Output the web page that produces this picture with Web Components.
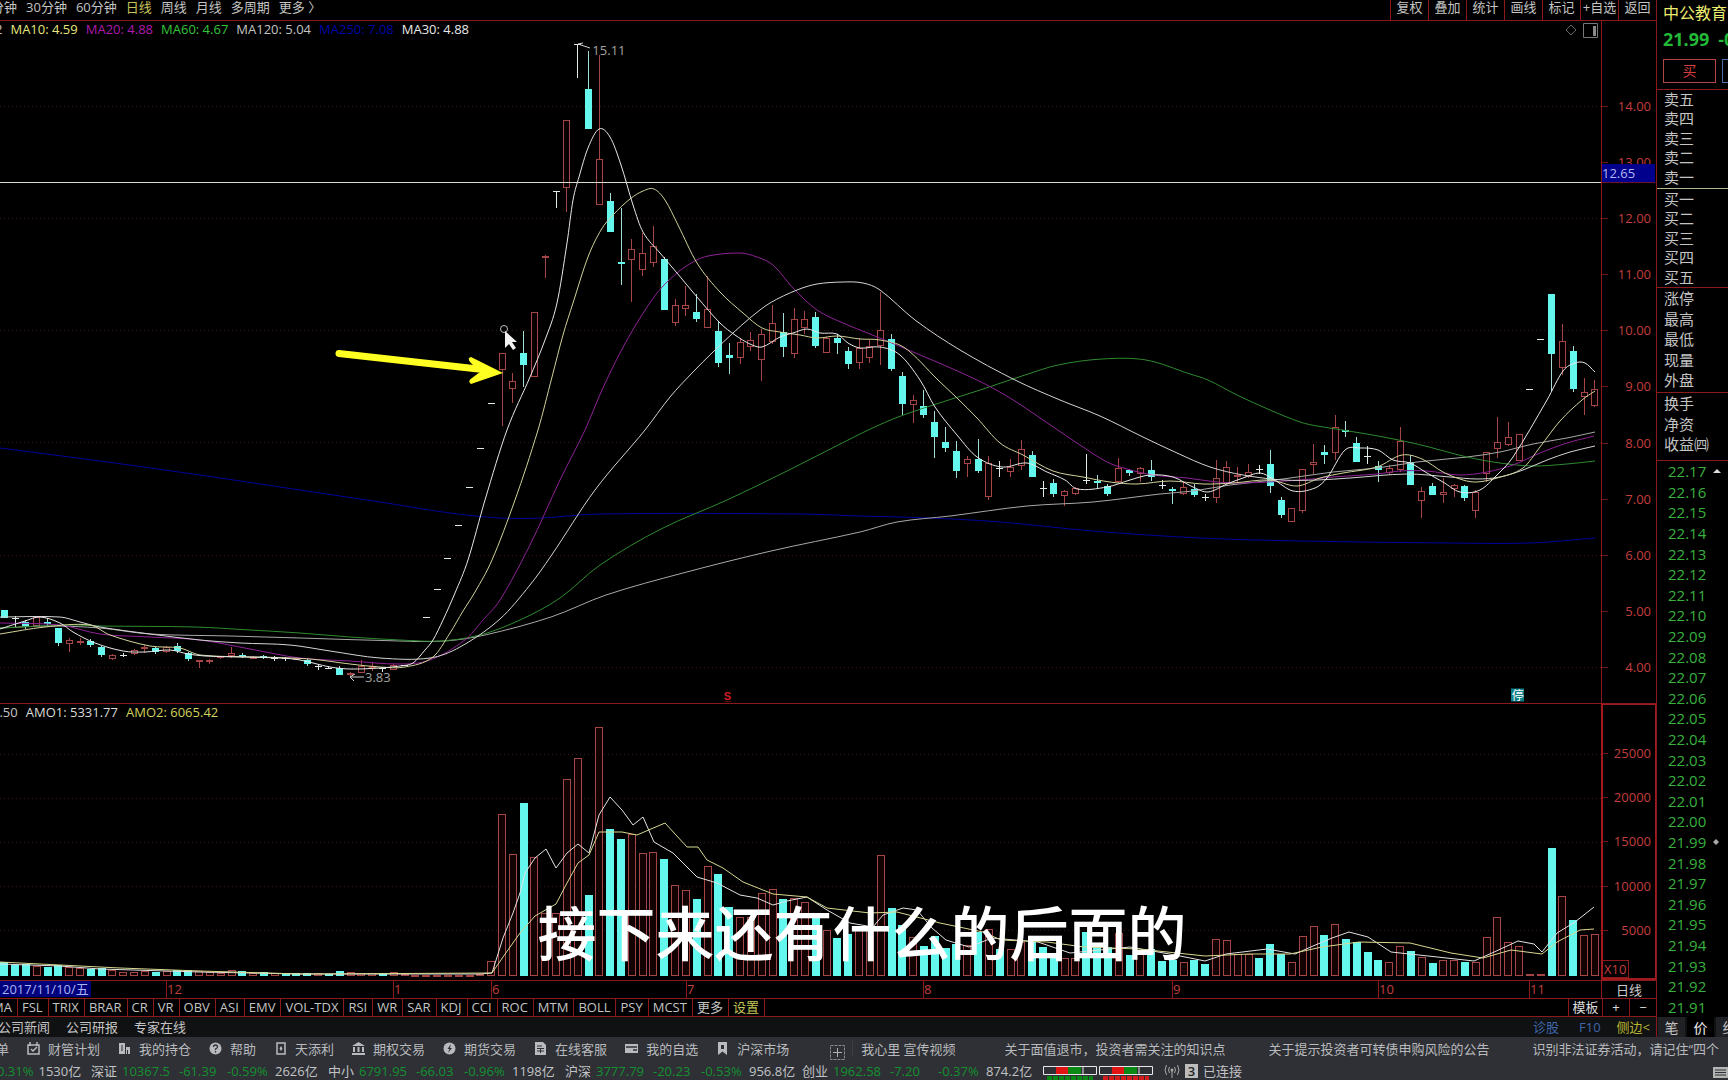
<!DOCTYPE html>
<html lang="zh-CN">
<head>
<meta charset="utf-8">
<title>中公教育 日线</title>
<style>
html,body{margin:0;height:100%;background:#000;overflow:hidden}
body{font:13px/18px "Open Sans","Noto Sans CJK SC",sans-serif;color:#c4c4c4;--line:#8c1a1a}
</style>
</head>
<body>
<trade-terminal></trade-terminal>
<script>
const BASE = `*{box-sizing:border-box}button{all:unset;box-sizing:border-box;cursor:pointer;white-space:nowrap}a{color:inherit;text-decoration:none;white-space:nowrap}`;
const define = (name, css, html) => customElements.define(name, class extends HTMLElement {
  connectedCallback() {
    if (this.shadowRoot) return;
    const t = document.createElement('template');
    t.innerHTML = `<style>${BASE}${css}</style>` + (typeof html === 'function' ? html(this) : html);
    this.attachShadow({ mode: 'open' }).append(t.content.cloneNode(true));
  }
});

/* ---- market data: kind, high, body top, body bottom, low ---- */
const FIRST = -46, STEP = 10.82, ORIGIN = 502;
const xAt = i => ORIGIN + STEP * (FIRST + i);
const CANDLES = `c610,610,618,618 w616,618,618,627 c620,622,626,629 r616,617,626,626 c618,622,624,627 c628,628,643,646 r638,640,644,652 r638,641,642,645 c639,641,645,647 c646,647,655,657 r654,655,659,660 w653,655,655,657 r649,650,654,655 r645,647,649,653 c647,648,652,654 r646,647,652,653 c643,646,651,653 c652,653,659,661 r660,660,662,668 r659,660,661,664 r656,656,658,659 r647,653,656,658 c653,655,657,658 r656,657,658,659 c655,656,658,659 w656,658,658,661 w657,658,658,661 r657,658,659,660 c658,660,664,666 w664,666,666,670 w666,668,668,669 c666,668,675,675 r672,673,675,676 r660,666,673,673 r662,666,667,671 w667,668,668,672 r664,665,670,670 w665,665,665,665 w641,641,641,641 w617,617,617,617 w589,589,589,589 w558,558,558,558 w525,525,525,525 w487,487,487,487 w448,448,448,448 w403,403,403,403
r353,353,370,426 r373,381,389,403 c331,353,365,387 r312,312,377,377 r255,256,258,278 w191,191,191,208 r120,120,188,212 w44,44,44,78 c51,89,129,129 r55,159,205,205 c193,201,232,232 c208,262,264,285 r239,249,260,302 r233,253,270,276 r226,246,263,267 c257,259,310,310 r299,305,323,326 r286,305,309,316 c294,312,319,322 r276,309,328,328 c321,331,363,367 c343,355,358,374 r338,342,358,364 r332,340,347,351 r329,334,360,381 r305,323,342,344 c313,332,347,357 r308,319,354,358 r311,319,328,334 c312,317,346,348 r337,338,353,353 c334,338,343,354 c347,351,364,369 r338,348,363,369 r340,346,358,363 r292,330,346,365 c334,339,369,371 c372,376,404,415 r395,400,405,423 c390,406,415,418 c411,422,437,458 c427,442,448,452 c441,451,471,478 r456,459,464,477 c439,459,471,473 r456,463,497,500 w461,468,468,477 r459,467,472,477 r440,449,466,470 c451,455,477,477
w481,488,488,497 c479,483,494,497 r490,491,496,506 r487,488,494,495 w454,480,480,484 c475,481,483,488 c484,486,494,496 r458,468,482,483 c469,470,473,476 r467,468,474,482 c460,470,477,481 w480,485,485,489 c487,489,491,504 r482,487,494,495 c484,489,495,497 w494,497,497,501 r460,478,498,503 r461,467,483,484 r467,475,476,482 r464,472,477,478 w465,469,469,474 c450,464,486,493 c497,500,515,518 r508,508,522,522 r469,469,511,513 r444,462,465,474 c445,452,455,464 r415,427,453,460 c421,430,432,437 c437,443,462,462 w446,456,456,464 c461,466,470,482 r465,468,473,475 r427,441,470,472 c455,462,485,485 r487,491,501,518 c483,486,495,495 r478,492,495,503 r484,485,489,497 c485,486,498,501 r490,492,511,518 r452,452,474,482 r417,442,449,458 r422,437,445,446 r434,434,461,461 w389,389,389,389 w339,339,339,339 c294,294,354,391 r324,341,368,375 c346,351,389,392 r378,392,397,415 r380,389,406,407`.split(/\s+/).map(s => [s[0], ...s.slice(1).split(',').map(Number)]);

const VOLUMES = `c962 c965 c964 r966 c967 c965 r967 r968 c969 c968 r970 r972 r972 r971 c972 r971 c970 c970 r971 r972 r973 r970 c971 r973 c972 r973 c973 c973 c973 r973 c974 c971 r972 r973 r973 c973 r972 r974 r975 r975 r975 r975 r975 r975 r974 r961
r814 r854 c803 r857 r913 r913 r779 r758 c895 r727 c829 c839 r834 r853 r852 c859 r885 r890 c899 r866 c874 c907 r917 r917 r893 r889 c899 r898 r902 c913 r930 c938 c934 r927 r930 r855 c908 c925 r937 c946 c936 c948 c944 r945 c932 r929 c949 r949 r942 c940 c947 c953 r958 r958 c932 c947 c947 r933 c955 r953 c949 c961 c960 r962 c960 c964 r939 r940 r954 r954 c958 c944 c954 r962 r936 r926 c935 r924 c939 c942 c952 c960 r962 r946 c951 r957 c963 r960 r960 c962 r962 r937 r917 r942 r946 r974 r974 c848 r896 c920 r935 r934`.split(/\s+/).map(s => [s[0], +s.slice(1)]);

const PRICE_LINES = {
  '#00009a': '0,448 100,461 200,475 300,490 380,502 450,513 500,518 540,518 600,514 800,514 860,516 930,518 1000,522 1093,531 1200,538 1300,541 1450,543 1530,543 1595,538',
  '#a8a8a8': '0,628 50,626 100,628 150,634 230,636 300,638 400,641 445,641 485,635 551,617 606,595 683,573 771,551 860,532 897,522 950,516 1027,506 1093,502 1160,494 1193,491 1230,485 1283,479 1333,472 1377,468 1417,462 1467,457 1500,452 1533,444 1567,438 1595,432',
  '#2f8a2f': '0,628 70,625 100,626 195,627 250,630 300,633 350,637 400,640 440,641 480,635 520,620 560,598 600,565 661,529 727,500 793,468 860,434 893,419 927,407 977,391 1025,375 1058,365 1102,359 1146,360 1190,374 1208,380 1237,395 1270,410 1300,422 1317,426 1367,434 1417,444 1467,457 1500,463 1533,466 1567,464 1595,461',
  '#8e2296': '0,623 60,625 100,634 150,637 200,640 250,649 300,658 350,661 400,664 430,660 465,640 483,620 500,600 530,545 560,480 585,430 602,390 620,353 637,323 657,293 677,273 693,262 708,256 740,253 757,257 773,265 793,288 817,310 843,323 870,334 925,357 977,380 1010,398 1043,420 1077,443 1107,462 1127,469 1153,475 1187,478 1217,482 1243,483 1300,480 1333,477 1377,474 1400,471 1427,471 1460,475 1487,472 1513,465 1540,453 1567,443 1594,436',
  '#d4d4d4': '0,617 60,617 80,622 100,627 150,634 200,640 240,643 290,645 330,651 380,658 430,658 460,647 500,619 530,585 551,556 595,490 645,430 670,397 693,372 713,352 733,333 750,318 770,303 797,290 817,284 843,282 863,283 880,290 915,320 960,350 1015,380 1060,400 1100,416 1143,437 1177,453 1210,467 1243,475 1283,480 1317,480 1350,478 1407,474 1450,477 1477,479 1500,477 1523,470 1547,460 1570,452 1595,446',
  '#d2d29a': '0,634 45,627 90,625 110,635 150,646 180,648 200,655 260,657 310,659 350,664 380,667 405,667 433,657 450,633 463,611 475,592 492,560 515,500 538,430 552,377 563,335 573,303 588,257 601,230 613,215 630,199 643,191 654,189 665,200 678,225 697,263 720,292 743,313 762,328 780,332 800,335 817,338 837,336 860,339 880,340 905,348 938,380 957,398 977,418 1000,443 1023,455 1053,471 1083,477 1110,482 1137,484 1170,481 1203,484 1233,483 1270,480 1297,486 1320,478 1343,473 1377,467 1402,455 1422,459 1443,472 1463,480 1477,482 1497,478 1523,468 1540,447 1560,421 1582,400 1595,391',
  '#e8e8e8': '0,629 25,621 40,617 60,623 73,632 95,643 123,651 145,652 170,650 188,654 205,656 240,657 280,658 300,660 330,667 350,669 380,668 400,666 413,663 425,650 433,640 443,620 455,593 468,560 485,500 507,430 530,377 545,340 557,303 567,243 573,200 579,177 588,148 599,129 610,137 621,165 633,205 643,232 660,253 677,273 697,297 720,323 735,335 750,344 762,347 780,337 793,333 807,329 820,333 837,334 848,343 860,348 880,347 900,355 920,380 935,407 957,435 977,457 1002,467 1027,463 1047,472 1065,480 1077,489 1107,487 1130,480 1150,475 1173,477 1193,487 1208,492 1227,484 1243,478 1260,473 1273,479 1293,491 1315,488 1327,478 1345,450 1360,448 1378,450 1393,460 1410,463 1427,473 1443,482 1460,492 1480,490 1497,475 1513,457 1547,400 1563,371 1575,363 1585,363 1595,372'
};
const VOLUME_LINES = {
  '#e2e2e2': '0,964 60,966 100,969 200,972 300,974 480,974 492,973 503,938 513,913 520,893 525,873 535,858 546,849 556,868 567,853 578,844 589,853 599,815 610,797 622,810 633,825 643,817 654,842 673,853 697,877 717,883 740,895 757,898 773,905 787,901 807,897 827,910 850,923 873,927 883,915 903,908 917,910 932,928 946,940 969,947 992,938 1038,942 1070,953 1130,947 1175,955 1205,961 1226,954 1267,949 1295,954 1313,946 1332,938 1349,932 1368,937 1391,952 1428,956 1474,961 1492,953 1518,941 1534,944 1542,952 1557,933 1575,922 1594,907',
  '#d8d890': '0,962 60,965 120,968 200,971 300,974 492,973 503,957 520,933 535,916 556,904 567,883 578,863 589,855 599,832 622,832 637,835 665,823 687,847 698,847 707,860 723,868 743,882 773,894 807,897 827,908 870,913 897,912 940,923 983,932 1001,940 1047,942 1084,947 1139,949 1205,956 1249,954 1290,954 1322,947 1359,942 1410,943 1451,953 1483,958 1511,950 1542,954 1557,942 1580,930 1594,929'
};

/* Smooth path through the points */
const curve = str => {
  const p = str.split(' ').map(s => s.split(',').map(Number));
  let d = 'M' + p[0];
  for (let i = 0; i < p.length - 1; i++) {
    const a = p[i - 1] || p[i], b = p[i], c = p[i + 1], e = p[i + 2] || c;
    const u = (c[0] - b[0]) / 3;
    const s1 = (c[1] - a[1]) / ((c[0] - a[0]) || 1), s2 = (e[1] - b[1]) / ((e[0] - b[0]) || 1);
    d += `C${b[0] + u} ${b[1] + s1 * u} ${c[0] - u} ${c[1] - s2 * u} ${c[0]} ${c[1]}`;
  }
  return d;
};
const straight = str => 'M' + str.replaceAll(' ', 'L');
const lines = (set, shape) => Object.entries(set).map(([c, s]) => `<path d="${shape(s)}" fill="none" stroke="${c}"/>`).join('');
const grid = ys => ys.map(y => `<path d="M0 ${y}.5H1601" stroke="#3a1414" stroke-dasharray="1 3"/>`).join('');
const RED = '#a64545', CYAN = '#63f7ee';

const candleSvg = CANDLES.map(([k, h, t, b, l], i) => {
  const x = Math.floor(xAt(i));
  if (k === 'w') return `<path d="M${x - 3} ${t}.5h7M${x + .5} ${h}V${l}" stroke="#dfe9e6" fill="none"/>`;
  if (k === 'c') return `<path d="M${x + .5} ${h}V${l}" stroke="#a4ddd8"/><rect x="${x - 3}" y="${t}" width="7" height="${Math.max(b - t, 2)}" fill="${CYAN}"/>`;
  return `<path d="M${x + .5} ${h}V${t}M${x + .5} ${b}V${l}" stroke="${RED}"/><rect x="${x - 2.5}" y="${t + .5}" width="6" height="${Math.max(b - t - 1, 1)}" fill="#080000" stroke="${RED}"/>`;
}).join('');

const volumeSvg = VOLUMES.map(([k, t], i) => {
  const x = Math.round(xAt(i));
  return k === 'c' ? `<rect x="${x - 4}" y="${t}" width="8" height="${976 - t}" fill="${CYAN}"/>`
    : `<rect x="${x - 3.5}" y="${t + .5}" width="7" height="${Math.max(975 - t, 1)}" fill="#120202" stroke="${RED}"/>`;
}).join('');

define('trade-terminal', `
:host{display:grid;grid-template-rows:minmax(0,1fr) auto;height:100vh;min-width:1280px}
.work{display:grid;grid-template-columns:minmax(0,1fr) 72px;min-height:0}
.left{display:grid;grid-template-rows:21px minmax(0,683fr) minmax(0,276fr) 18px 19px 20px;min-width:0}
.pane{display:grid;grid-template-columns:minmax(0,1fr) 55px;min-height:0}
.price{border-bottom:1px solid var(--line)}
caption-overlay{position:absolute;left:0;right:0;bottom:113px}`,
`<main class="work"><div class="left">
<period-bar></period-bar>
<div class="pane price"><price-chart></price-chart><price-axis></price-axis></div>
<div class="pane"><volume-chart></volume-chart><volume-axis></volume-axis></div>
<date-axis></date-axis><indicator-tabs></indicator-tabs><info-strip></info-strip>
</div><quote-panel></quote-panel></main>
<footer><tool-dock></tool-dock><index-ticker></index-ticker></footer>
<caption-overlay>接下来还有什么的后面的</caption-overlay>`);

define('caption-overlay', `:host{display:block;text-align:center;pointer-events:none;color:#fff;padding-right:4px;font:500 59px/72px "Noto Sans CJK SC",sans-serif}`, `<slot></slot>`);

define('period-bar', `
:host{display:flex;justify-content:space-between;border-bottom:1px solid var(--line);overflow:hidden;line-height:15px}
button{padding-bottom:5px}
nav{display:flex;gap:9px;margin-left:-9px}
.on{color:#c8c45c}
.tools{display:grid;grid-template-columns:repeat(7,38px)}
.tools button{border-left:1px solid var(--line);text-align:center}`,
`<nav>${['分钟', '30分钟', '60分钟', '日线', '周线', '月线', '多周期', '更多 〉'].map(t => `<button${t === '日线' ? ' class="on"' : ''}>${t}</button>`).join('')}</nav>
<div class="tools">${['复权', '叠加', '统计', '画线', '标记', '+自选', '返回'].map(t => `<button>${t}</button>`).join('')}</div>`);

define('chart-legend', `:host{display:flex;gap:8px;white-space:nowrap;overflow:hidden}`, `<slot></slot>`);

define('price-chart', `
:host{display:block;position:relative;overflow:hidden;min-height:0}
svg.plot{display:block;width:100%;height:100%}
chart-legend{position:absolute;left:-5px;top:-1px}
.mark{position:absolute;color:#a2a2a2;transform:translateY(-50%)}
.corner{position:absolute;right:2px;top:2px;display:flex;gap:6px}
.halt{background:#0c8088;color:#fff;font-size:12px;line-height:13px;width:13px;text-align:center}
.split{color:#d02020;font-size:11px;font-weight:700}`,
`<svg class="plot" viewBox="0 21 1601 682" preserveAspectRatio="none">
${grid([106, 218, 330, 442, 555, 667])}
<g shape-rendering="crispEdges">${candleSvg}</g>
${lines(PRICE_LINES, curve)}
<path d="M0 182.500H1601" stroke="#dcdccc"/>
<path d="M578 44l12 4M578 44l5-1M350 677h14M350 677l5-3M350 677l4 4" stroke="#d0d0d0" fill="none"/>
<path d="M339 353.500L478 369" stroke="#ff2" stroke-width="7" stroke-linecap="round"/>
<path d="M471 357L503 373L471 384Q467 381 472 378L480 372L470 362Q467 358 471 357Z" fill="#ff2"/>
<circle cx="504" cy="329" r="3.500" fill="none" stroke="#bbb"/>
<path d="M505 331v17l4-4 4 6 3-2-4-6h5z" fill="#f2f2f2"/>
</svg>
<chart-legend><span>2</span><span style="color:#e6e67c">MA10: 4.59</span><span style="color:#ad1aad">MA20: 4.88</span><span style="color:#35c43a">MA60: 4.67</span><span>MA120: 5.04</span><span style="color:#0000a6">MA250: 7.08</span><span style="color:#e8e8e8">MA30: 4.88</span></chart-legend>
<span class="mark" style="left:37%;top:4.300%">15.11</span>
<span class="mark" style="left:22.800%;top:96.200%">3.83</span>
<span class="mark split" style="left:45.200%;top:99%">S̲</span>
<span class="mark halt" style="left:94.400%;top:98.800%">停</span>
<span class="corner"><svg width="12" height="14"><path d="M6 2l5 5-5 5-5-5z" fill="none" stroke="#666"/></svg><svg width="16" height="16"><path d="M.5.500h14v14H.5z" fill="none" stroke="#777"/><path d="M10 3h3v10h-3z" fill="#888"/></svg></span>`);

define('price-axis', `
:host{display:grid;position:relative;grid-template-rows:repeat(11,1fr);padding:57px 5px 8px 0;border-left:1px solid var(--line);color:#c43e3e;min-height:0;overflow:hidden}
span{display:flex;align-items:center;justify-content:flex-end;position:relative}
span::before{content:"";position:absolute;left:0;top:50%;width:6px;border-top:1px solid #6c1818}
output{position:absolute;left:0;right:1px;top:143px;line-height:18px;background:#00008c;color:#b4b8f0;border-bottom:1px solid #701030}`,
[14, 13, 12, 11, 10, 9, 8, 7, 6, 5, 4].map(n => `<span>${n}.00</span>`).join('') + '<output>12.65</output>');

define('volume-chart', `
:host{display:block;position:relative;overflow:hidden;min-height:0}
svg{display:block;width:100%;height:100%}
chart-legend{position:absolute;left:-8px;top:-1px}`,
`<svg viewBox="0 704 1601 276" preserveAspectRatio="none">${grid([754, 798, 842, 886, 930])}<g shape-rendering="crispEdges">${volumeSvg}</g>${lines(VOLUME_LINES, straight)}</svg>
<chart-legend><span>7.50</span><span style="color:#dcdcdc">AMO1: 5331.77</span><span style="color:#d2d25e">AMO2: 6065.42</span></chart-legend>`);

define('volume-axis', `
:host{display:grid;grid-template-rows:repeat(5,44fr) 8fr 18px;padding:26px 4px 0 0;border:2px solid #a01a1e;border-top-width:1px;border-right-width:1px;color:#c43e3e;min-height:0}
span{display:flex;align-items:center;justify-content:flex-end;position:relative;min-height:0}
span::before{content:"";position:absolute;left:0;top:50%;width:5px;border-top:1px solid #6c1818}
b{grid-row:7;font-weight:400;justify-self:start;border:1px solid var(--line);border-left:0;line-height:16px;padding:0 2px 0 1px}`,
['25000', '20000', '15000', '10000', '5000'].map(t => `<span>${t}</span>`).join('') + '<b>X10</b>');

define('date-axis', `
:host{display:grid;grid-template-columns:minmax(0,1fr) 55px;border-top:1px solid var(--line);line-height:16px;color:#c43e3e;overflow:hidden}
.track{display:grid;grid-template-columns:166fr 227fr 98fr 195fr 237fr 249fr 206fr 151fr 72fr}
.track span+span{border-left:1px solid var(--line)}
time{background:#00007c;color:#aab4f4;display:inline-block;padding:0 2px}
button{border-left:1px solid var(--line);color:#ccc;text-align:center}`,
`<div class="track"><span><time datetime="2017-11-10">2017/11/10/五</time></span>${['12', '1', '6', '7', '8', '9', '10', '11'].map(t => `<span>${t}</span>`).join('')}</div><button>日线</button>`);

define('indicator-tabs', `
:host{display:flex;border:1px solid var(--line);border-width:1px 0;line-height:17px;overflow:hidden;color:#c4c4c4}
button{border-right:1px solid var(--line);padding:0 5px 0 4px;text-align:center}
.first{margin-left:-12px}.set{color:#c4c458}
.end{margin-left:auto;display:grid;grid-template-columns:34px 27px 27px}
.end button{border-right:0;border-left:1px solid var(--line);padding:0;color:#ddd}`,
['MA', 'FSL', 'TRIX', 'BRAR', 'CR', 'VR', 'OBV', 'ASI', 'EMV', 'VOL-TDX', 'RSI', 'WR', 'SAR', 'KDJ', 'CCI', 'ROC', 'MTM', 'BOLL', 'PSY', 'MCST', '更多', '设置'].map((t, i) => `<button class="${i ? '' : 'first'}${t === '设置' ? 'set' : ''}">${t}</button>`).join('') +
'<div class="end"><button>模板</button><button>+</button><button>−</button></div>');

define('info-strip', `
:host{display:flex;justify-content:space-between;background:#101112;line-height:20px;overflow:hidden;padding-right:6px}
nav{display:flex;gap:16px;margin-left:-2px}
nav.r{gap:20px;color:#3f67ac}.y{color:#b8b430;margin-left:-4px}`,
`<nav><a href="#news">公司新闻</a><a href="#report">公司研报</a><a href="#expert">专家在线</a></nav>
<nav class="r"><a href="#diag">诊股</a><a href="#f10">F10</a><a class="y" href="#side">侧边&lt;</a></nav>`);

const rows = (a, cls) => `<ul class="${cls}">${a.map(t => `<li>${t}</li>`).join('')}</ul>`;
const ladder = Array.from({ length: 27 }, (_, i) => (22.17 - i / 100).toFixed(2));
define('quote-panel', `
:host{display:flex;flex-direction:column;border-left:1px solid var(--line);overflow:hidden;min-height:0;white-space:nowrap}
header{height:89px;padding:1px 0 0 6px;flex:none}
h1{margin:0;font-size:16px;font-weight:400;line-height:24px;color:#ecec70}
.last{display:flex;gap:9px;font-size:18px;font-weight:700;line-height:28px;color:#22b838}
.deal{display:flex;gap:6px;margin-top:6px}
.deal button{flex:0 0 53px;height:24px;border:1px solid #b04646;color:#d23c3c;text-align:center;line-height:20px;font-size:14px}
.deal button+button{border-color:#4a70a8;color:#5080c0}
ul{display:grid;grid-auto-rows:1fr;list-style:none;margin:0;padding:0 0 0 7px;border-top:1px solid var(--line);font-size:15px;flex:none;line-height:18px}
li{min-height:0}
.ask,.bid{height:99px}
.ask{padding-bottom:1px}
.bid{border-top-color:#b8b890;padding-top:1px}
.stat{height:105px;padding-top:1px}
.fin{height:68px;padding:1px 0 4px 7px}
ul.book{flex:1;padding-left:11px;font-size:15px;color:#38b03e}
.book li{display:flex;align-items:center;gap:7px}
.book svg{flex:none}
nav{display:flex;height:20px;background:#101112;gap:2px;line-height:19px;flex:none;padding-left:1px;font-size:14px}
nav button{flex:0 0 27px;background:#202124;text-align:center}nav .on{background:#000;color:#eee}`,
`<header><h1>中公教育</h1><div class="last"><span>21.99</span><span>-0</span></div><div class="deal"><button>买</button><button>卖</button></div></header>
${rows(['卖五', '卖四', '卖三', '卖二', '卖一'], 'ask')}${rows(['买一', '买二', '买三', '买四', '买五'], 'bid')}
${rows(['涨停', '最高', '最低', '现量', '外盘'], 'stat')}${rows(['换手', '净资', '收益㈣'], 'fin')}
<ul class="book">${ladder.map(p => `<li>${p}${p === '22.17' ? '<svg width="8" height="6"><path d="M0 5l4-4 4 4z" fill="#ddd"/></svg>' : p === '21.99' ? '<svg width="6" height="6"><path d="M3 0l3 3-3 3-3-3z" fill="#aaa"/></svg>' : ''}</li>`).join('')}</ul>
<nav><button>笔</button><button class="on">价</button><button>细</button></nav>`);

const ICONS = {
  plan: '<path d="M1 3h11v9H1zM3 0v4M10 0v4" fill="none" stroke="currentColor" stroke-width="1.500"/><path d="M4 7l2 2 4-4" fill="none" stroke="currentColor" stroke-width="1.500"/>',
  hold: '<path d="M1 1h6v11H1zM8 5h4v7H8z" fill="currentColor"/><path d="M3 4h2M3 6h2M3 8h2M9.500 8v4" stroke="#2e3035"/>',
  help: '<circle cx="6.500" cy="6.500" r="6" fill="currentColor"/><path d="M4.500 5q0-2 2-2t2 2q0 1-2 2v1M6.500 9v1.500" fill="none" stroke="#2e3035" stroke-width="1.300"/>',
  phone: '<path d="M3 1h8v11H3z" fill="none" stroke="currentColor" stroke-width="1.500"/><path d="M7 4l1.500 2.500L7 9 5.500 6.500z" fill="currentColor"/>',
  bank: '<path d="M6.500 0L13 4H0zM1 5h2v5H1zM5.500 5h2v5h-2zM10 5h2v5h-2zM0 11h13v2H0z" fill="currentColor"/>',
  bolt: '<circle cx="6.500" cy="6.500" r="6" fill="currentColor"/><path d="M8 2L4.500 7h2L5 11l4-5H7z" fill="#2e3035"/>',
  serve: '<path d="M1 0h8l3 3v10H1z" fill="currentColor"/><path d="M3 4h5M3 6.500h7M3 9h7M6.500 6v5" stroke="#2e3035"/>',
  card: '<path d="M0 2h13v9H0z" fill="currentColor"/><path d="M1 5h11M8 8h4" stroke="#2e3035" stroke-width="1.500"/>',
  mark: '<path d="M2 0h9v13L6.500 9.500 2 13z" fill="currentColor"/><path d="M5 3h3v4H5z" fill="#2e3035"/>'
};
define('dock-item', `:host{display:flex}a{display:flex;align-items:center;gap:8px}svg{flex:none}`,
  el => `<a href="#${el.getAttribute('icon')}"><svg width="13" height="13">${ICONS[el.getAttribute('icon')]}</svg><slot></slot></a>`);

define('tool-dock', `
:host{display:flex;height:25px;align-items:center;background:#2e3035;overflow:hidden;white-space:nowrap;color:#b9babd;padding-bottom:2px}
nav,.news{display:flex;flex:none;align-items:center}
nav{gap:18px;margin-left:-4px;line-height:16px}
.add{flex:none;margin:7px 7px 0 41px;display:flex;padding:0}
.news{gap:43px;border-left:1px solid #3c3e44;padding-left:8px;line-height:16px}
.news a:first-child{margin-right:6px}`,
`<nav><a href="#menu">单</a>${[['plan', '财管计划'], ['hold', '我的持仓'], ['help', '帮助'], ['phone', '天添利'], ['bank', '期权交易'], ['bolt', '期货交易'], ['serve', '在线客服'], ['card', '我的自选'], ['mark', '沪深市场']].map(([i, t]) => `<dock-item icon="${i}">${t}</dock-item>`).join('')}</nav>
<button class="add" aria-label="添加"><svg width="15" height="15"><path d="M.5.500h14v14H.5z" fill="none" stroke="#8a8b8e" stroke-dasharray="3 1"/><path d="M7.500 3v9M3 7.500h9" stroke="#b0b0b0"/></svg></button>
<div class="news"><a href="#v">我心里 宣传视频</a><a href="#n1">关于面值退市，投资者需关注的知识点</a><a href="#n2">关于提示投资者可转债申购风险的公告</a><a href="#n3">识别非法证券活动，请记住“四个</a></div>`);

define('index-quote', `
:host{display:grid;grid-template-columns:31px 57px 48px 48px 53px}
.d{color:#149030}`,
  el => { const [n, v, c, p, a] = el.getAttribute('data').split(','); return `<span>${n}</span><span class="d">${v}</span><span class="d">${c}</span><span class="d">${p}</span><span>${a}</span>`; });

define('index-ticker', `
:host{display:flex;height:18px;background:#2e3035;overflow:hidden;white-space:nowrap;color:#c2c3c6}
.cut{flex:0 0 91px;display:flex;gap:5px}
.cut span:first-child{color:#149030;margin-left:-3px}
index-quote{flex:none}
.m{flex:none;margin:4px 2px 0 0}
.m1{margin-left:4px}
.link{display:flex;align-items:center;gap:5px;margin-left:9px}
b{background:#bcbcbc;color:#222;width:13px;line-height:14px;text-align:center;font-weight:600}
.end{margin:4px 0 0 auto;flex:none}`,
`<div class="cut"><span>0.31%</span><span>1530亿</span></div>
${['深证,10367.5,-61.39,-0.59%,2626亿', '中小,6791.95,-66.03,-0.96%,1198亿', '沪深,3777.79,-20.23,-0.53%,956.8亿', '创业,1962.58,-7.20,-0.37%,874.2亿'].map(d => `<index-quote data="${d}"></index-quote>`).join('')}
${['#0a8a14', '#d41c1c'].map((c, i) => `<svg class="m m${i + 1}" width="54" height="14"><path d="M13 1h12v7H13z" fill="#e01414"/><path d="M25 1h13v7H25z" fill="#0a8a14"/><path d="M.5.500h53v8H.5zM40 1v7" fill="none" stroke="#e8e8e8"/><path d="M4 11.500h46M4 14h46" stroke="${c}" stroke-width="3" stroke-dasharray="5 1"/></svg>`).join('')}
<div class="link"><svg width="16" height="14"><path d="M8 6v8M5.500 3q-2 3 0 6M10.500 3q2 3 0 6M2.500 1q-3 5 0 10M13.500 1q3 5 0 10" fill="none" stroke="#aaa"/><circle cx="8" cy="6" r="1.500" fill="#aaa"/></svg><b>3</b><span>已连接</span></div>
<svg class="end" width="15" height="13"><path d="M0 1h15v11H0z" fill="#b4b4b4"/><path d="M2 4h11M2 6.500h11M2 9h11" stroke="#2e3035"/></svg>`);
</script>
</body>
</html>
